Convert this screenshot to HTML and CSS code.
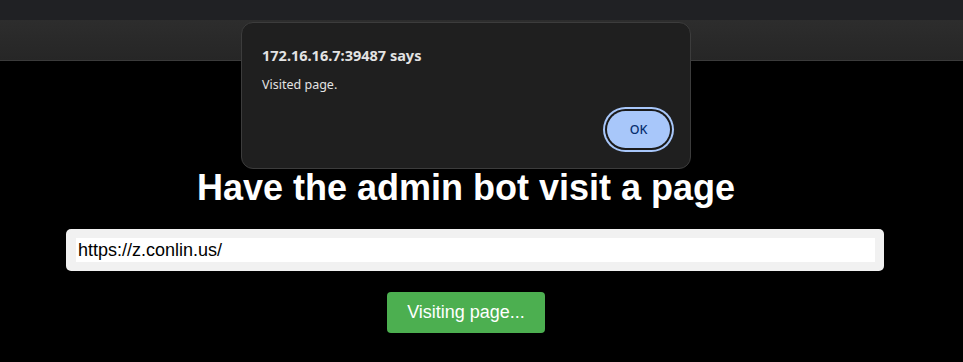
FILE: index.html
```html
<!DOCTYPE html>
<html lang="en">
<head>
  <meta charset="UTF-8" />
  <title>Admin Bot</title>
  <link rel="stylesheet" href="styles.css">
</head>
<body>
  <!-- browser chrome -->
  <div class="tabstrip"></div>
  <div class="toolbar"></div>

  <div class="page">
    <div class="container">
      <h1>Have the admin bot visit a page</h1>
      <div class="field">
        <input type="text" id="url" value="https://z.conlin.us/" />
      </div>
      <button class="visit">Visiting page...</button>
    </div>
  </div>

  <!-- alert() dialog -->
  <div class="dialog">
    <div class="dialog-title">172.16.16.7:39487 says</div>
    <div class="dialog-msg">Visited page.</div>
    <div class="dialog-actions">
      <button class="ok">OK</button>
    </div>
  </div>
</body>
</html>
```

FILE: styles.css
```css
html, body {
  margin: 0;
  padding: 0;
  background: #000;
  height: 100%;
  overflow: hidden;
}

body {
  font-family: 'Liberation Sans', Arial, sans-serif;
  position: relative;
}

.tabstrip {
  height: 20px;
  background: #202124;
}

.toolbar {
  height: 40px;
  background: linear-gradient(#2d2d2d, #262626);
  border-bottom: 1px solid #3b3b3b;
}

.page {
  background: #000;
  color: #fff;
}

.container {
  width: 800px;
  margin-left: 66px;
  padding-top: 106px;
  display: flex;
  flex-direction: column;
  align-items: center;
}

h1 {
  font-size: 36px;
  font-weight: bold;
  margin: 0;
  line-height: 42px;
  text-align: center;
}

.field {
  align-self: flex-start;
  margin-top: 20px;
  padding: 9px 9px 9px 10px;
  background: #f1f1f1;
  border-radius: 5px;
}

.field input {
  display: block;
  width: 797px;
  height: 24px;
  padding: 0 0 0 2px;
  border: none;
  outline: none;
  background: #fff;
  font-family: 'Liberation Sans', Arial, sans-serif;
  font-size: 18px;
  color: #000;
}

.visit {
  margin-top: 21px;
  padding: 10px 20px;
  height: 41px;
  background: #4caf50;
  color: #fff;
  border: none;
  border-radius: 4px;
  font-family: 'Liberation Sans', Arial, sans-serif;
  font-size: 18px;
}

.dialog {
  position: absolute;
  left: 241px;
  top: 22px;
  width: 408px;
  height: 103px;
  padding: 22px 20px 20px 20px;
  background: #1f1f1f;
  border: 1px solid #3c3c3c;
  border-radius: 12px;
  font-family: 'Noto Sans', 'Open Sans', sans-serif;
  color: #e3e3e3;
  display: flex;
  flex-direction: column;
}

.dialog-title {
  font-size: 14.5px;
  font-weight: bold;
  line-height: 20px;
}

.dialog-msg {
  font-size: 12.5px;
  line-height: 18px;
  margin-top: 11px;
}

.dialog-actions {
  display: flex;
  justify-content: flex-end;
  margin-top: auto;
}

.ok {
  width: 63px;
  height: 37px;
  border: none;
  border-radius: 19px;
  background: #a8c7fa;
  color: #062e6f;
  font-family: 'Noto Sans', 'Open Sans', sans-serif;
  font-size: 12.5px;
  font-weight: 500;
  box-shadow: 0 0 0 2px #1a1a1a, 0 0 0 4px #a8c7fa;
}
```
